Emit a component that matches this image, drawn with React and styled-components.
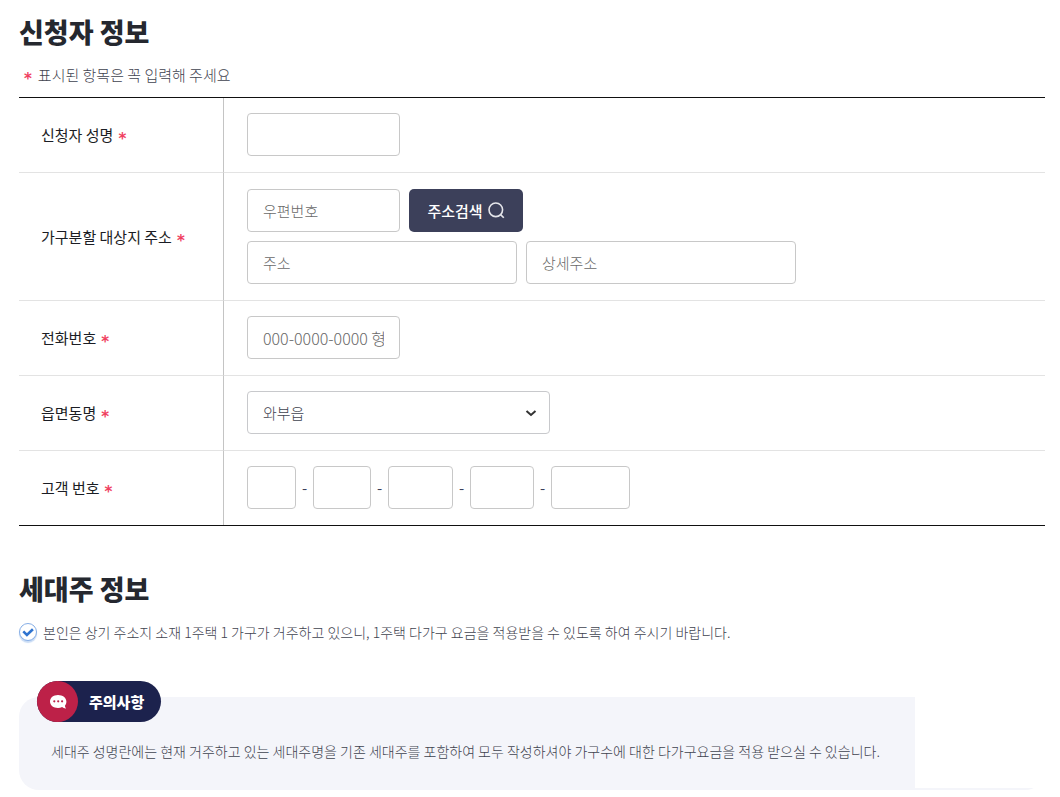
import React, { useState } from 'react';
import styled, { createGlobalStyle } from 'styled-components';

const GlobalStyle = createGlobalStyle`
  * {
    box-sizing: border-box;
  }
  body {
    margin: 0;
    background: #fff;
    color: #3f434f;
    font-family: 'Noto Sans CJK KR', 'Noto Sans', sans-serif;
    font-size: 15px;
  }
  input, select, button {
    font-family: inherit;
    font-size: inherit;
  }
`;

const Page = styled.main`
  padding: 12px 15px 0 19px;
`;
const Section = styled.section`
  & + & {
    margin-top: 43px;
  }
`;
const Title = styled.h2`
  margin: 0 0 11px;
  color: #25282f;
  font-size: 27px;
  font-weight: 900;
  line-height: 40px;
`;
const Guide = styled.p`
  display: flex;
  align-items: center;
  gap: 6px;
  margin: 0 0 10px;
  padding-left: 5px;
  font-weight: 300;
  line-height: 24px;
`;
const Star = styled.span`
  padding-top: 8px;
  color: #f0405f;
  font-family: 'DejaVu Sans', sans-serif;
  font-size: 15px;
  font-weight: 700;
  line-height: 16px;
`;

const FormTable = styled.table`
  width: 100%;
  border-collapse: separate;
  border-spacing: 0;
  border-top: 1px solid #111;
  border-bottom: 1px solid #111;
  tr:not(:last-child) > * {
    border-bottom: 1px solid #e3e3e3;
  }
`;
const HeadCell = styled.th`
  width: 205px;
  padding: 0 0 0 22px;
  border-right: 1px solid #c4c4c4;
  color: #1b1d24;
  font-weight: 400;
  text-align: left;
`;
const HeadLabel = styled.label`
  display: flex;
  align-items: center;
  gap: 5px;
  line-height: 24px;
`;
const Cell = styled.td`
  padding: ${({ $tall }) => ($tall ? '16px' : '15px')} 0 16px 23px;
`;
const Fields = styled.div`
  display: flex;
  flex-wrap: wrap;
  align-items: center;
  gap: 9px;
  & + & {
    margin-top: 9px;
  }
`;
const TextField = styled.input`
  width: ${({ $width }) => $width || 153}px;
  max-width: 100%;
  height: 43px;
  padding: 0 15px;
  border: 1px solid #c8c8c8;
  border-radius: 4px;
  background: #fff;
  color: #3f434f;
  font-weight: 300;
  &::placeholder {
    color: #696969;
  }
  &[type='tel'] {
    font-size: 16px;
  }
`;
const SearchButton = styled.button`
  display: flex;
  align-items: center;
  justify-content: center;
  gap: 5px;
  width: 114px;
  height: 43px;
  padding: 0;
  border: 0;
  border-radius: 5px;
  background: #3c405a;
  color: #fff;
  font-weight: 500;
  cursor: pointer;
`;
const SelectWrap = styled.div`
  position: relative;
  width: 303px;
  max-width: 100%;
  svg {
    position: absolute;
    top: 17px;
    right: 13px;
    pointer-events: none;
  }
`;
const Select = styled.select`
  display: block;
  width: 100%;
  height: 43px;
  padding: 0 36px 0 15px;
  appearance: none;
  border: 1px solid #c8c9cc;
  border-radius: 4px;
  background: #fff;
  color: #3f434f;
  font-weight: 300;
`;
const NumberFields = styled.div`
  display: flex;
  align-items: center;
`;
const Dash = styled.span`
  width: 17px;
  color: #3c405a;
  text-align: center;
`;

const Agree = styled.label`
  display: flex;
  align-items: center;
  gap: 6px;
  font-size: 14px;
  font-weight: 300;
  line-height: 24px;
`;
const CheckWrap = styled.span`
  position: relative;
  width: 18px;
  height: 18px;
  svg {
    position: absolute;
    top: 0;
    left: 0;
    pointer-events: none;
  }
`;
const Check = styled.input`
  display: block;
  width: 18px;
  height: 18px;
  margin: 0;
  appearance: none;
  border: 1px solid #86aee6;
  border-radius: 50%;
  background: #fff;
  box-shadow: 0 2px 1px #c9dcf5;
`;

const Notice = styled.div`
  position: relative;
  display: flex;
  margin-top: 53px;
  padding-bottom: 2px;
  border-radius: 20px;
  background: #f4f5fa;
`;
const NoticeText = styled.p`
  flex: 1;
  margin: 0;
  padding: 42px 0 25px 32px;
  font-size: 14px;
  font-weight: 300;
  line-height: 24px;
`;
const NoticeBlank = styled.div`
  width: 130px;
  background: #fff;
`;
const Badge = styled.strong`
  position: absolute;
  top: -16px;
  left: 18px;
  display: flex;
  align-items: center;
  gap: 11px;
  height: 41px;
  padding-right: 17px;
  border-radius: 21px;
  background: #1c224d;
  color: #fff;
  font-weight: 900;
  line-height: 24px;
`;
const BadgeIcon = styled.span`
  display: flex;
  align-items: center;
  justify-content: center;
  width: 41px;
  height: 41px;
  border-radius: 50%;
  background: #bd2148;
`;

const numberWidths = [49, 58, 65, 64, 79];

const SearchIcon = () => (
  <svg width="17" height="17" viewBox="0 0 17 17" fill="none" stroke="#e4e5ea" strokeWidth="1.6" aria-hidden="true">
    <circle cx="7.8" cy="7.8" r="6.8" />
    <path d="M12.6 12.6l3.2 3.2" />
  </svg>
);

const ChevronIcon = () => (
  <svg width="12" height="10" viewBox="0 0 12 10" fill="none" stroke="#333" strokeWidth="2" aria-hidden="true">
    <path d="M1.5 3l4.5 4 4.5-4" />
  </svg>
);

const TickIcon = () => (
  <svg width="18" height="18" viewBox="0 0 18 18" fill="none" stroke="#2f74d0" strokeWidth="2.6" aria-hidden="true">
    <path d="M4.3 8.4l3.6 3.5 6-5.7" />
  </svg>
);

const TalkIcon = () => (
  <svg width="18" height="16" viewBox="0 0 18 16" aria-hidden="true">
    <path
      fill="#fff"
      d="M9 1C4.4 1 1 3.8 1 7.5S4.4 14 9 14c1.5 0 2.9-.3 4.1-.9 1 .9 2.5 1.5 4 1.4-.7-.8-1.1-1.7-1.2-2.8 1-1.2 1.500-2.600 1.500-4.200C17.400 3.800 13.600 1 9 1z"
    />
    <g fill="#bd2148">
      <circle cx="5.3" cy="7.3" r="1.1" />
      <circle cx="9.2" cy="7.3" r="1.1" />
      <circle cx="13.1" cy="7.3" r="1.1" />
    </g>
  </svg>
);

const FormRow = ({ label, htmlFor, tall, children }) => (
  <tr>
    <HeadCell scope="row">
      <HeadLabel htmlFor={htmlFor}>
        {label} <Star>*</Star>
      </HeadLabel>
    </HeadCell>
    <Cell $tall={tall}>{children}</Cell>
  </tr>
);

const App = () => {
  const [agreed, setAgreed] = useState(true);

  return (
    <>
      <GlobalStyle />
      <Page>
        <Section>
          <Title>신청자 정보</Title>
          <Guide>
            <Star>*</Star> 표시된 항목은 꼭 입력해 주세요
          </Guide>
          <FormTable>
            <tbody>
              <FormRow label="신청자 성명" htmlFor="name">
                <Fields>
                  <TextField id="name" type="text" />
                </Fields>
              </FormRow>
              <FormRow label="가구분할 대상지 주소" htmlFor="zipcode" tall>
                <Fields>
                  <TextField id="zipcode" type="text" placeholder="우편번호" />
                  <SearchButton type="button">
                    주소검색 <SearchIcon />
                  </SearchButton>
                </Fields>
                <Fields>
                  <TextField type="text" $width={270} placeholder="주소" aria-label="주소" />
                  <TextField type="text" $width={270} placeholder="상세주소" aria-label="상세주소" />
                </Fields>
              </FormRow>
              <FormRow label="전화번호" htmlFor="phone">
                <Fields>
                  <TextField id="phone" type="tel" placeholder="000-0000-0000 형식" />
                </Fields>
              </FormRow>
              <FormRow label="읍면동명" htmlFor="town">
                <SelectWrap>
                  <Select id="town" defaultValue="와부읍">
                    <option value="와부읍">와부읍</option>
                  </Select>
                  <ChevronIcon />
                </SelectWrap>
              </FormRow>
              <FormRow label="고객 번호" htmlFor="customer0">
                <NumberFields>
                  {numberWidths.map((width, i) => (
                    <React.Fragment key={i}>
                      {i > 0 && <Dash>-</Dash>}
                      <TextField id={`customer${i}`} type="text" $width={width} aria-label={`고객 번호 ${i + 1}`} />
                    </React.Fragment>
                  ))}
                </NumberFields>
              </FormRow>
            </tbody>
          </FormTable>
        </Section>

        <Section>
          <Title>세대주 정보</Title>
          <Agree>
            <CheckWrap>
              <Check type="checkbox" checked={agreed} onChange={(e) => setAgreed(e.target.checked)} />
              {agreed && <TickIcon />}
            </CheckWrap>
            본인은 상기 주소지 소재 1주택 1 가구가 거주하고 있으니, 1주택 다가구 요금을 적용받을 수 있도록 하여 주시기 바랍니다.
          </Agree>
          <Notice>
            <Badge>
              <BadgeIcon>
                <TalkIcon />
              </BadgeIcon>
              주의사항
            </Badge>
            <NoticeText>
              세대주 성명란에는 현재 거주하고 있는 세대주명을 기존 세대주를 포함하여 모두 작성하셔야 가구수에 대한 다가구요금을 적용 받으실 수 있습니다.
            </NoticeText>
            <NoticeBlank />
          </Notice>
        </Section>
      </Page>
    </>
  );
};

export default App;
